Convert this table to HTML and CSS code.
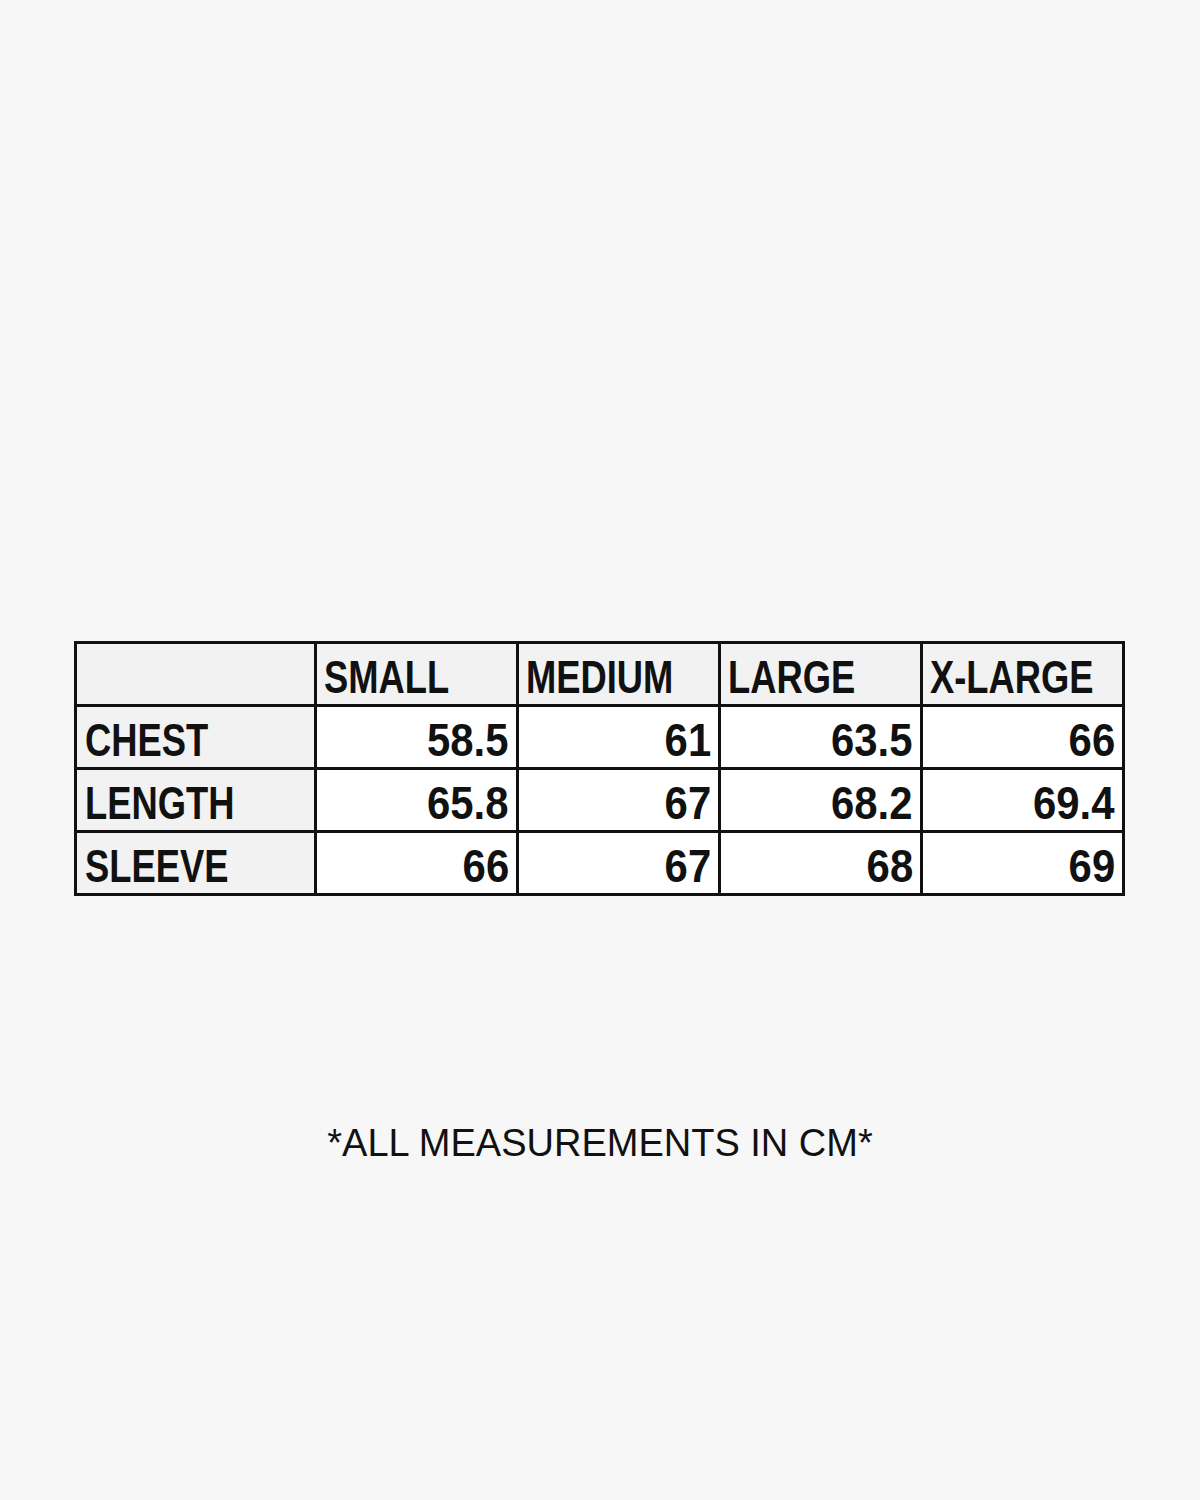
FILE: index.html
```html
<!DOCTYPE html>
<html>
<head>
<meta charset="utf-8">
<link rel="stylesheet" href="styles.css">
</head>
<body>
<main class="page">
  <div class="size-table">
    <div class="cell head corner"></div>
    <div class="cell head"><span class="txt">SMALL</span></div>
    <div class="cell head"><span class="txt">MEDIUM</span></div>
    <div class="cell head"><span class="txt">LARGE</span></div>
    <div class="cell head"><span class="txt">X-LARGE</span></div>

    <div class="cell label"><span class="txt">CHEST</span></div>
    <div class="cell num"><span class="txt">58.5</span></div>
    <div class="cell num"><span class="txt">61</span></div>
    <div class="cell num"><span class="txt">63.5</span></div>
    <div class="cell num"><span class="txt">66</span></div>

    <div class="cell label"><span class="txt">LENGTH</span></div>
    <div class="cell num"><span class="txt">65.8</span></div>
    <div class="cell num"><span class="txt">67</span></div>
    <div class="cell num"><span class="txt">68.2</span></div>
    <div class="cell num"><span class="txt">69.4</span></div>

    <div class="cell label"><span class="txt">SLEEVE</span></div>
    <div class="cell num"><span class="txt">66</span></div>
    <div class="cell num"><span class="txt">67</span></div>
    <div class="cell num"><span class="txt">68</span></div>
    <div class="cell num"><span class="txt">69</span></div>
  </div>
  <p class="note">*ALL MEASUREMENTS IN CM*</p>
</main>
</body>
</html>
```

FILE: styles.css
```css
html, body {
  margin: 0;
  padding: 0;
  background: #f7f7f7;
}
.page {
  padding-top: 641px;
  height: 859px;
  display: flex;
  flex-direction: column;
  align-items: flex-start;
}
.size-table {
  margin-left: 74px;
  display: grid;
  grid-template-columns: 237px repeat(4, 199px);
  grid-auto-rows: 60px;
  gap: 3px;
  padding: 3px;
  background: #111;
}
.cell {
  display: flex;
  align-items: flex-end;
  padding: 0 7px 4px 7px;
  font-family: "Liberation Sans", Arial, sans-serif;
  font-weight: 700;
  font-size: 46px;
  line-height: 1;
  color: #111;
  background: #fff;
  white-space: nowrap;
  overflow: hidden;
}
.head, .label {
  background: #f2f2f2;
}
.label {
  padding-left: 8px;
}
.txt {
  display: inline-block;
  transform: scaleX(0.79);
  transform-origin: left bottom;
}
.num {
  justify-content: flex-end;
}
.num .txt {
  transform: scaleX(0.91);
  transform-origin: right bottom;
}
.note {
  align-self: stretch;
  margin: 226px 0 0;
  text-align: center;
  font-family: "Liberation Sans", Arial, sans-serif;
  font-size: 38px;
  color: #111;
}
```
